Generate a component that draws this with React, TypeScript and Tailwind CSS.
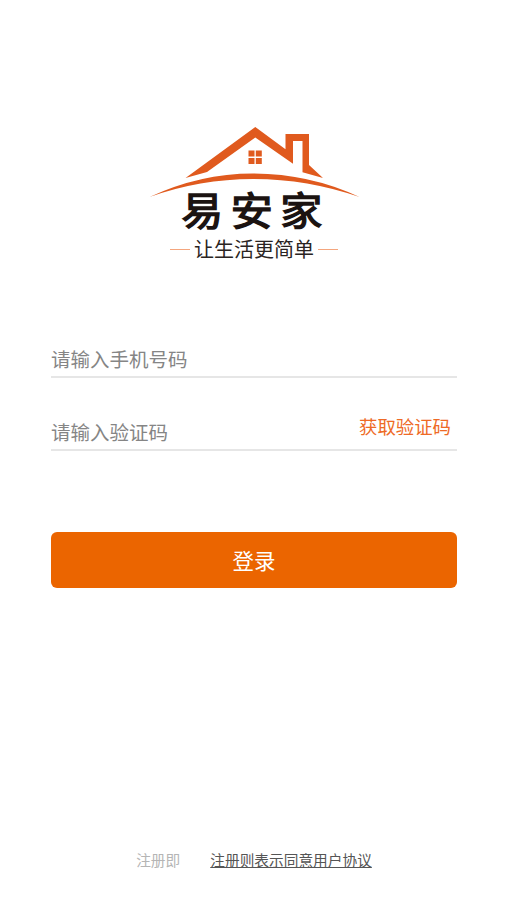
function HouseLogo() {
  return (
    <svg width="211" height="72" viewBox="149 126 211 72" fill="none" className="shrink-0">
      {/* Roof and chimney */}
      <path
        d="M185.5 178L255.3 127L285.5 149.3V134H309V165L323 178L302.5 172.3V141H293V163.8L255.3 137.5L207 172Z"
        fill="#e05a1e"
      />
      {/* Window */}
      <path d="M248.5 150.5h6v6h-6zM255.8 150.5h6v6h-6zM248.5 158h6v6h-6zM255.8 158h6v6h-6z" fill="#e05a1e" />
      {/* Ground arc */}
      <path d="M149.5 197Q200 173.5 253 173.5Q309 173.5 359.5 197Q307 179 253 179Q200 179 149.5 197Z" fill="#e05a1e" />
    </svg>
  );
}

export default function App() {
  return (
    <div className="flex h-[900px] w-full flex-col bg-white pr-[50px] pl-[51px] font-['Noto_Sans_CJK_SC',sans-serif]">
      {/* Brand */}
      <header className="flex h-[261px] flex-col items-center pt-[126px]">
        <HouseLogo />
        <h1 className="-mt-[8px] ml-[3px] h-[40px] scale-y-[0.92] text-[42px] leading-[36px] font-normal tracking-[7.5px] whitespace-nowrap text-[#1b1311] [-webkit-text-stroke:1.5px_#1b1311]">
          易安家
        </h1>
        <div className="mt-[9px] flex items-center gap-1">
          <span className="h-px w-5 bg-[#f4a67e]" />
          <span className="text-[20px] leading-5 whitespace-nowrap text-[#2a2422]">让生活更简单</span>
          <span className="h-px w-5 bg-[#f4a67e]" />
        </div>
      </header>

      {/* Login form */}
      <form className="flex flex-col pt-[80px]" onSubmit={(e) => e.preventDefault()}>
        <input
          type="tel"
          placeholder="请输入手机号码"
          className="h-[37px] w-full border-b-2 border-[#e6e6e6] text-[19.5px] outline-none placeholder:text-[#858585]"
        />
        <div className="mt-[36px] flex h-[37px] border-b-2 border-[#e6e6e6]">
          <input
            type="text"
            placeholder="请输入验证码"
            className="min-w-0 flex-1 text-[19.5px] outline-none placeholder:text-[#858585]"
          />
          <button type="button" className="mr-[6px] h-6 text-[18.4px] leading-6 text-[#ee6a26]">
            获取验证码
          </button>
        </div>
        <button
          type="submit"
          className="mt-[81px] h-[56px] w-full rounded-md bg-[#eb6500] text-[21.5px] text-white"
        >
          登录
        </button>
      </form>

      {/* Agreement */}
      <footer className="mt-auto mb-[29px] flex justify-center gap-[30px] text-[14.7px] leading-[22px]">
        <span className="text-[#b5b5b5]">注册即</span>
        <a href="#" className="text-[#555] underline">
          注册则表示同意用户协议
        </a>
      </footer>
    </div>
  );
}
